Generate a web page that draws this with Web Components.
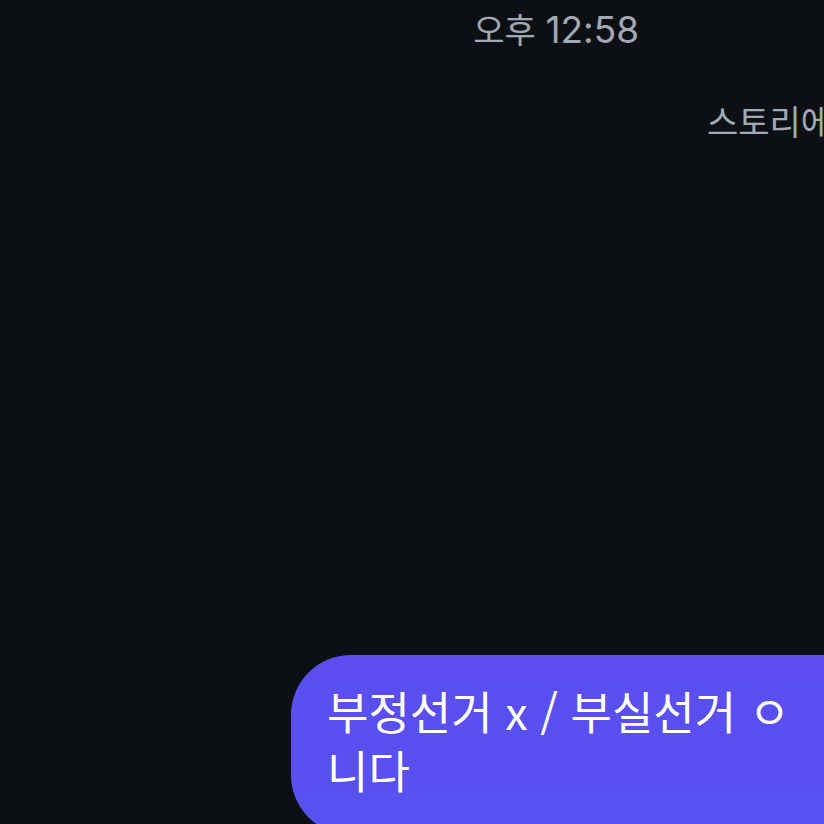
<!DOCTYPE html>
<html lang="ko">
<head>
<meta charset="utf-8">
<meta name="viewport" content="width=device-width, initial-scale=1">
<title>채팅</title>
<style>
    body {
        margin: 0;
        min-height: 100vh;
        overflow: hidden;
        background: #0c1014;
        font-family: Inter, "Noto Sans CJK KR", sans-serif;
    }
</style>
</head>
<body>
<chat-thread>
    <chat-time>오후 <span slot="clock">12:58</span></chat-time>
    <chat-note>스토리에</chat-note>
    <chat-bubble>부정선거 x / 부실선거 ㅇ<br>니다</chat-bubble>
</chat-thread>

<script>
class ChatThread extends HTMLElement {
    constructor() {
        super()
        this.attachShadow({mode: 'open'})
    }

    // the thread is wider than the window, the right side is cut off
    connectedCallback() {
        this.shadowRoot.innerHTML = `<style>
            :host {
                display: flex;
                flex-direction: column;
                box-sizing: border-box;
                width: 135vw;
                height: 100vh;
                padding-top: 6px;
            }
        </style>
        <slot></slot>`;
    }
}

class ChatTime extends HTMLElement {
    constructor() {
        super()
        this.attachShadow({mode: 'open'})
    }

    connectedCallback() {
        this.shadowRoot.innerHTML = `<style>
            :host {
                display: block;
                text-align: center;
                font-size: 34px;
                line-height: 48px;
                color: #a2a8b4;
            }
            ::slotted(span) {
                font-size: 37px;
            }
        </style>
        <time datetime="12:58"><slot></slot><slot name="clock"></slot></time>`;
    }
}

class ChatNote extends HTMLElement {
    constructor() {
        super()
        this.attachShadow({mode: 'open'})
    }

    connectedCallback() {
        this.shadowRoot.innerHTML = `<style>
            :host {
                display: block;
                flex: none;
                height: 556px;
                margin-top: 44px;
                padding-left: 707px;
                font-size: 34px;
                line-height: 48px;
                color: #a2a8b4;
                box-sizing: border-box;
                white-space: nowrap;
            }
        </style>
        <slot></slot>`;
    }
}

class ChatBubble extends HTMLElement {
    constructor() {
        super()
        this.attachShadow({mode: 'open'})
    }

    connectedCallback() {
        this.shadowRoot.innerHTML = `<style>
            :host {
                display: block;
                flex: none;
                margin-left: 291px;
                padding: 26px 36px 36px;
                border-radius: 60px;
                background: linear-gradient(#5c4dee, #5652ef);
                color: #fff;
                font-family: "Noto Sans CJK KR", sans-serif;
                font-size: 45px;
                line-height: 59px;
                white-space: nowrap;
            }
        </style>
        <slot></slot>`;
    }
}

customElements.define('chat-thread', ChatThread)
customElements.define('chat-time', ChatTime)
customElements.define('chat-note', ChatNote)
customElements.define('chat-bubble', ChatBubble)
</script>
</body>
</html>
